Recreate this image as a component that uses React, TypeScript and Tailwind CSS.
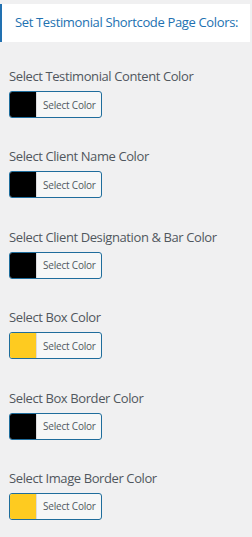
import React from "react";

const fields: { label: string; color: string }[] = [
  { label: "Select Testimonial Content Color", color: "#000000" },
  { label: "Select Client Name Color", color: "#000000" },
  { label: "Select Client Designation & Bar Color", color: "#000000" },
  { label: "Select Box Color", color: "#fecb20" },
  { label: "Select Box Border Color", color: "#000000" },
  { label: "Select Image Border Color", color: "#fecb20" },
];

const ColorButton: React.FC<{ color: string }> = ({ color }) => (
  <button className="flex h-[27px] w-[93px] overflow-hidden rounded-[3px] border border-[#1f6d9c] bg-[#f6f7f7] p-0">
    <span className="h-full w-[27px] border-r border-[#dcdcde]" style={{ backgroundColor: color }} />
    <span className="flex flex-1 items-center pl-[6px] text-[10px] leading-none tracking-[-0.2px] text-[#50575e]">
      Select Color
    </span>
  </button>
);

const App: React.FC = () => {
  return (
    <div className="min-h-[537px] bg-[#f0f0f1] pt-1 font-['Open_Sans',sans-serif]">
      <div className="mr-[2px] flex h-[38px] items-center whitespace-nowrap border-l-2 border-[#2271b1] bg-white pl-[13px] text-[13px] tracking-[-0.35px] text-[#2271b1]">
        Set Testimonial Shortcode Page Colors:
      </div>
      <div className="flex flex-col gap-[28.4px] px-[9px] pt-[24px]">
        {fields.map((f) => (
          <div key={f.label} className="flex flex-col items-start gap-[5px]">
            <label className="text-[13px] leading-[20px] tracking-[-0.4px] text-[#50575e]">{f.label}</label>
            <ColorButton color={f.color} />
          </div>
        ))}
      </div>
    </div>
  );
};

export default App;
